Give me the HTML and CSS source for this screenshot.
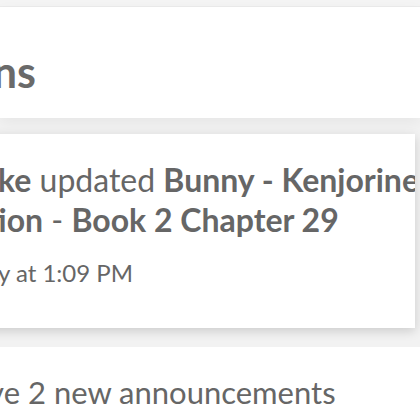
FILE: index.html
```html
<!DOCTYPE html>
<html lang="en">
<head>
<meta charset="utf-8">
<title>Notifications</title>
<link rel="stylesheet" href="styles.css">
</head>
<body>
  <div class="topbar"></div>
  <header class="page-header">
    <div class="title-anchor">
      <h1 class="title">Notifications</h1>
    </div>
  </header>
  <main class="feed">
    <article class="card">
      <div class="line l1"><strong>Blake</strong> updated <strong>Bunny - Kenjorine's</strong></div>
      <div class="line l2"><strong>Edition</strong> - <strong>Book 2 Chapter 29</strong></div>
      <div class="meta l3">Yesterday at 1:09 PM</div>
    </article>
  </main>
  <section class="announce">
    <p class="announce-text">You have 2 new announcements</p>
  </section>
</body>
</html>
```

FILE: styles.css
```css
* { box-sizing: border-box; }
html, body { margin: 0; padding: 0; }
body {
  background: #f2f2f2;
  font-family: Lato, "Open Sans", sans-serif;
  color: #666666;
  overflow: hidden;
  width: 420px;
  height: 420px;
}
.topbar {
  height: 7px;
  background: #f4f4f4;
  border-bottom: 1px solid #ebebeb;
}
.page-header {
  background: #ffffff;
  height: 111px;
  box-shadow: 0 5px 14px rgba(0, 0, 0, 0.05);
  position: relative;
  z-index: 1;
  padding-top: 39px;
}
.title-anchor {
  width: 36px;
  display: flex;
  justify-content: flex-end;
}
.title {
  margin: 0;
  font-size: 43px;
  line-height: 1.2;
  font-weight: 700;
  white-space: nowrap;
  color: #6a6a6a;
}
.feed {
  padding-top: 16px;
}
.card {
  background: #ffffff;
  margin-left: -40px;
  margin-right: 5px;
  height: 194px;
  padding: 26px 0 0 0;
  box-shadow: 0 3px 10px rgba(0, 0, 0, 0.16);
  overflow: hidden;
  white-space: nowrap;
}
.line {
  font-size: 32px;
  line-height: 40px;
}
.line strong { font-weight: 700; }
.l1 { margin-left: -7px; }
.l2 { margin-left: -18px; }
.meta {
  font-size: 24px;
  line-height: 30px;
  margin-top: 18px;
}
.l3 { margin-left: -52px; }
.announce {
  margin-top: 19px;
  background: #ffffff;
  height: 80px;
  overflow: hidden;
}
.announce-text {
  margin: 0 0 0 -103px;
  padding-top: 27px;
  font-size: 31px;
  line-height: 1.2;
  white-space: nowrap;
}
```
